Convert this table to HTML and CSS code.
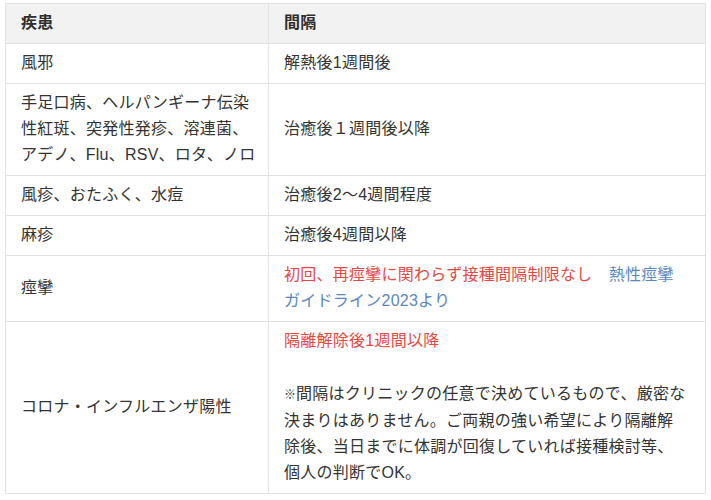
FILE: index.html
```html
<!DOCTYPE html>
<html lang="ja">
<head>
<meta charset="utf-8">
<link rel="stylesheet" href="styles.css">
</head>
<body>
<table class="tbl">
  <colgroup><col class="c1"><col class="c2"></colgroup>
  <thead>
    <tr><th>疾患</th><th>間隔</th></tr>
  </thead>
  <tbody>
    <tr><td>風邪</td><td>解熱後1週間後</td></tr>
    <tr><td>手足口病、ヘルパンギーナ伝染<br>性紅斑、突発性発疹、溶連菌、<br>アデノ、Flu、RSV、ロタ、ノロ</td><td>治癒後１週間後以降</td></tr>
    <tr><td>風疹、おたふく、水痘</td><td>治癒後2〜4週間程度</td></tr>
    <tr><td>麻疹</td><td>治癒後4週間以降</td></tr>
    <tr><td>痙攣</td><td><span class="red">初回、再痙攣に関わらず接種間隔制限なし</span>　<span class="blue">熱性痙攣<br>ガイドライン2023より</span></td></tr>
    <tr><td>コロナ・インフルエンザ陽性</td><td><div class="red">隔離解除後1週間以降</div><div class="note"><span class="kome">※</span>間隔はクリニックの任意で決めているもので、厳密な<br>決まりはありません。ご両親の強い希望により隔離解<br>除後、当日までに体調が回復していれば接種検討等、<br>個人の判断でOK。</div></td></tr>
  </tbody>
</table>
</body>
</html>
```

FILE: styles.css
```css
html, body {
  margin: 0;
  padding: 0;
  background: #ffffff;
}
body {
  font-family: "Liberation Sans", "Noto Sans CJK JP", sans-serif;
  font-size: 16px;
  color: #333333;
}
.tbl {
  margin: 3px 0 0 5px;
  border-collapse: collapse;
  table-layout: fixed;
  width: 700px;
}
.c1 { width: 263px; }
.c2 { width: 437px; }
.tbl th,
.tbl td {
  border: 1px solid #e2e2e2;
  padding: 6px 8px 7px 15px;
  line-height: 26px;
  text-align: left;
  vertical-align: middle;
  letter-spacing: 0.25px;
  white-space: nowrap;
}
.tbl th {
  background: #f2f2f2;
  font-weight: bold;
  color: #2e2e2e;
}
.red { color: #e5483f; }
.blue { color: #5a87c0; }
.note { margin-top: 27px; }
.kome { font-size: 12px; font-weight: bold; letter-spacing: 0; }
```
